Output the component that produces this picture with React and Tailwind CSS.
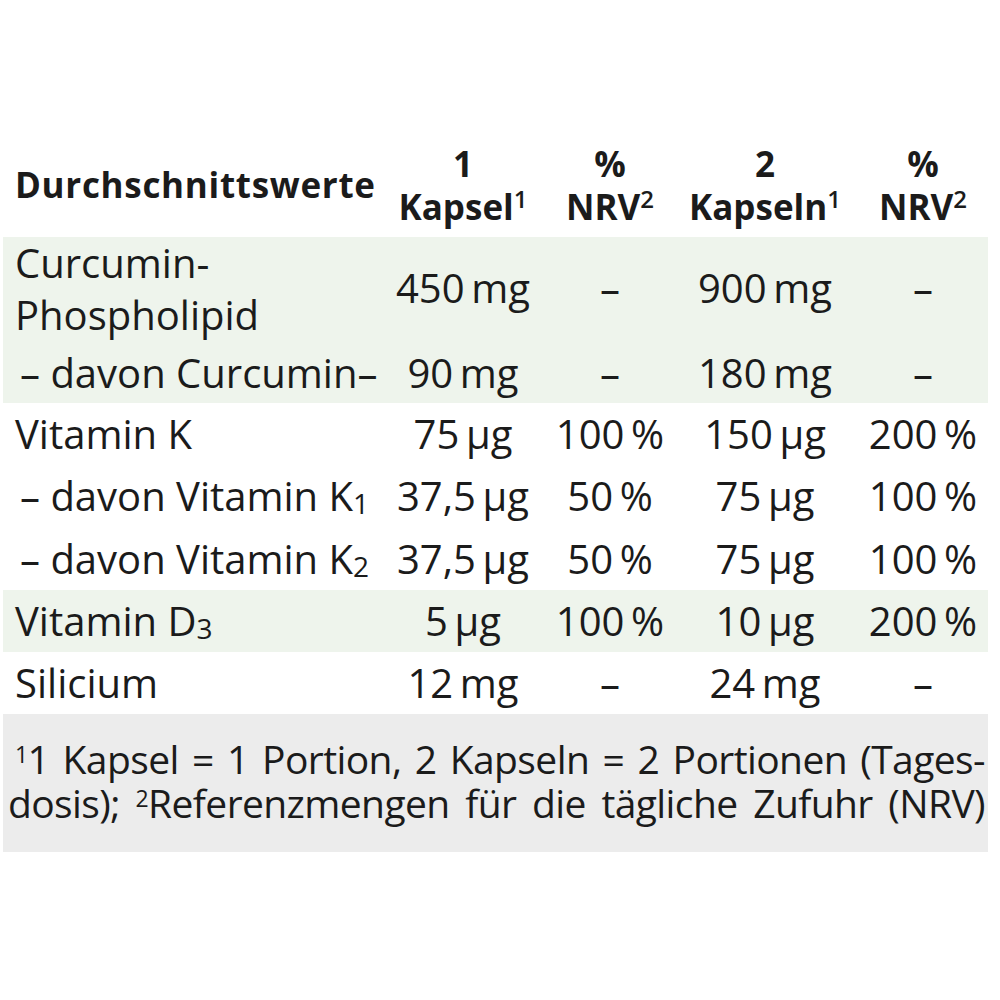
import React from "react";

const F = { fontFamily: "'Open Sans', 'Noto Sans', sans-serif" };

function Cell({ children, className = "" }) {
  return <div className={"flex items-center justify-center whitespace-nowrap " + className}>{children}</div>;
}

function Row({ label, v, bg = "", h = "h-[62px]", labelClass = "" }) {
  return (
    <div className={"grid grid-cols-[390px_140px_154px_156px_145px] " + h + " " + bg}>
      <div className={"flex items-center pl-[12px] whitespace-nowrap " + labelClass}>{label}</div>
      <Cell>{v[0]}</Cell>
      <Cell>{v[1]}</Cell>
      <Cell>{v[2]}</Cell>
      <Cell className="pl-[15px]">{v[3]}</Cell>
    </div>
  );
}

const sp = "\u2009";
const D = "\u2013";

export default function App() {
  return (
    <div className="w-[1000px] h-[1000px] bg-white text-[#1b1b1b]" style={F}>
      <div className="pt-[142px] ml-[3px] w-[985px]">
        {/* header */}
        <div className="grid grid-cols-[390px_140px_154px_156px_145px] h-[95px] font-bold text-[35px] leading-[43px]">
          <div className="flex items-start pt-[21px] pl-[12px] whitespace-nowrap tracking-[0.7px]">Durchschnittswerte</div>
          <div className="text-center whitespace-nowrap">1<br />Kapsel<sup className="font-semibold text-[24px]">1</sup></div>
          <div className="text-center whitespace-nowrap">%<br />NRV<sup className="font-semibold text-[24px]">2</sup></div>
          <div className="text-center whitespace-nowrap">2<br />Kapseln<sup className="font-semibold text-[24px]">1</sup></div>
          <div className="text-center whitespace-nowrap pl-[15px]">%<br />NRV<sup className="font-semibold text-[24px]">2</sup></div>
        </div>

        <div className="bg-[#eef4ec] text-[40px]">
          <div className="grid grid-cols-[390px_140px_154px_156px_145px] h-[106px] leading-[52px]">
            <div className="pl-[12px] whitespace-nowrap">Curcumin-<br />Phospholipid</div>
            <Cell className="pb-[4px]">450{sp}mg</Cell>
            <Cell className="pb-[4px]">{D}</Cell>
            <Cell className="pb-[4px]">900{sp}mg</Cell>
            <Cell className="pb-[4px] pl-[15px]">{D}</Cell>
          </div>
          <Row h="h-[60px]" labelClass="pl-[17px]" label={<>{D} davon Curcumin{D}</>} v={[<>90{sp}mg</>, D, <>180{sp}mg</>, D]} />
        </div>

        <div className="text-[40px]">
          <Row label="Vitamin K" v={[<>75{sp}µg</>, <>100{sp}%</>, <>150{sp}µg</>, <>200{sp}%</>]} />
          <Row labelClass="pl-[17px]" label={<>{D} davon Vitamin K<sub className="text-[28px]">1</sub></>} v={[<>37,5{sp}µg</>, <>50{sp}%</>, <>75{sp}µg</>, <>100{sp}%</>]} />
          <Row h="h-[63px]" labelClass="pl-[17px]" label={<>{D} davon Vitamin K<sub className="text-[28px]">2</sub></>} v={[<>37,5{sp}µg</>, <>50{sp}%</>, <>75{sp}µg</>, <>100{sp}%</>]} />
          <Row bg="bg-[#eef4ec]" label={<>Vitamin D<sub className="text-[28px]">3</sub></>} v={[<>5{sp}µg</>, <>100{sp}%</>, <>10{sp}µg</>, <>200{sp}%</>]} />
          <Row label="Silicium" v={[<>12{sp}mg</>, D, <>24{sp}mg</>, D]} />
        </div>

        <div className="bg-[#ececec] h-[138px] pt-[23px] pl-[12px] pr-[3px] text-[39px] leading-[44px] tracking-[-0.6px]">
          <div className="text-justify [text-align-last:justify] whitespace-nowrap"><sup className="text-[23px]">1</sup>1 Kapsel = 1 Portion, 2 Kapseln = 2 Portionen (Tages-</div>
          <div className="text-justify [text-align-last:justify] whitespace-nowrap -ml-[7px]">dosis); <sup className="text-[23px]">2</sup>Referenzmengen für die tägliche Zufuhr (NRV)</div>
        </div>
      </div>
    </div>
  );
}
